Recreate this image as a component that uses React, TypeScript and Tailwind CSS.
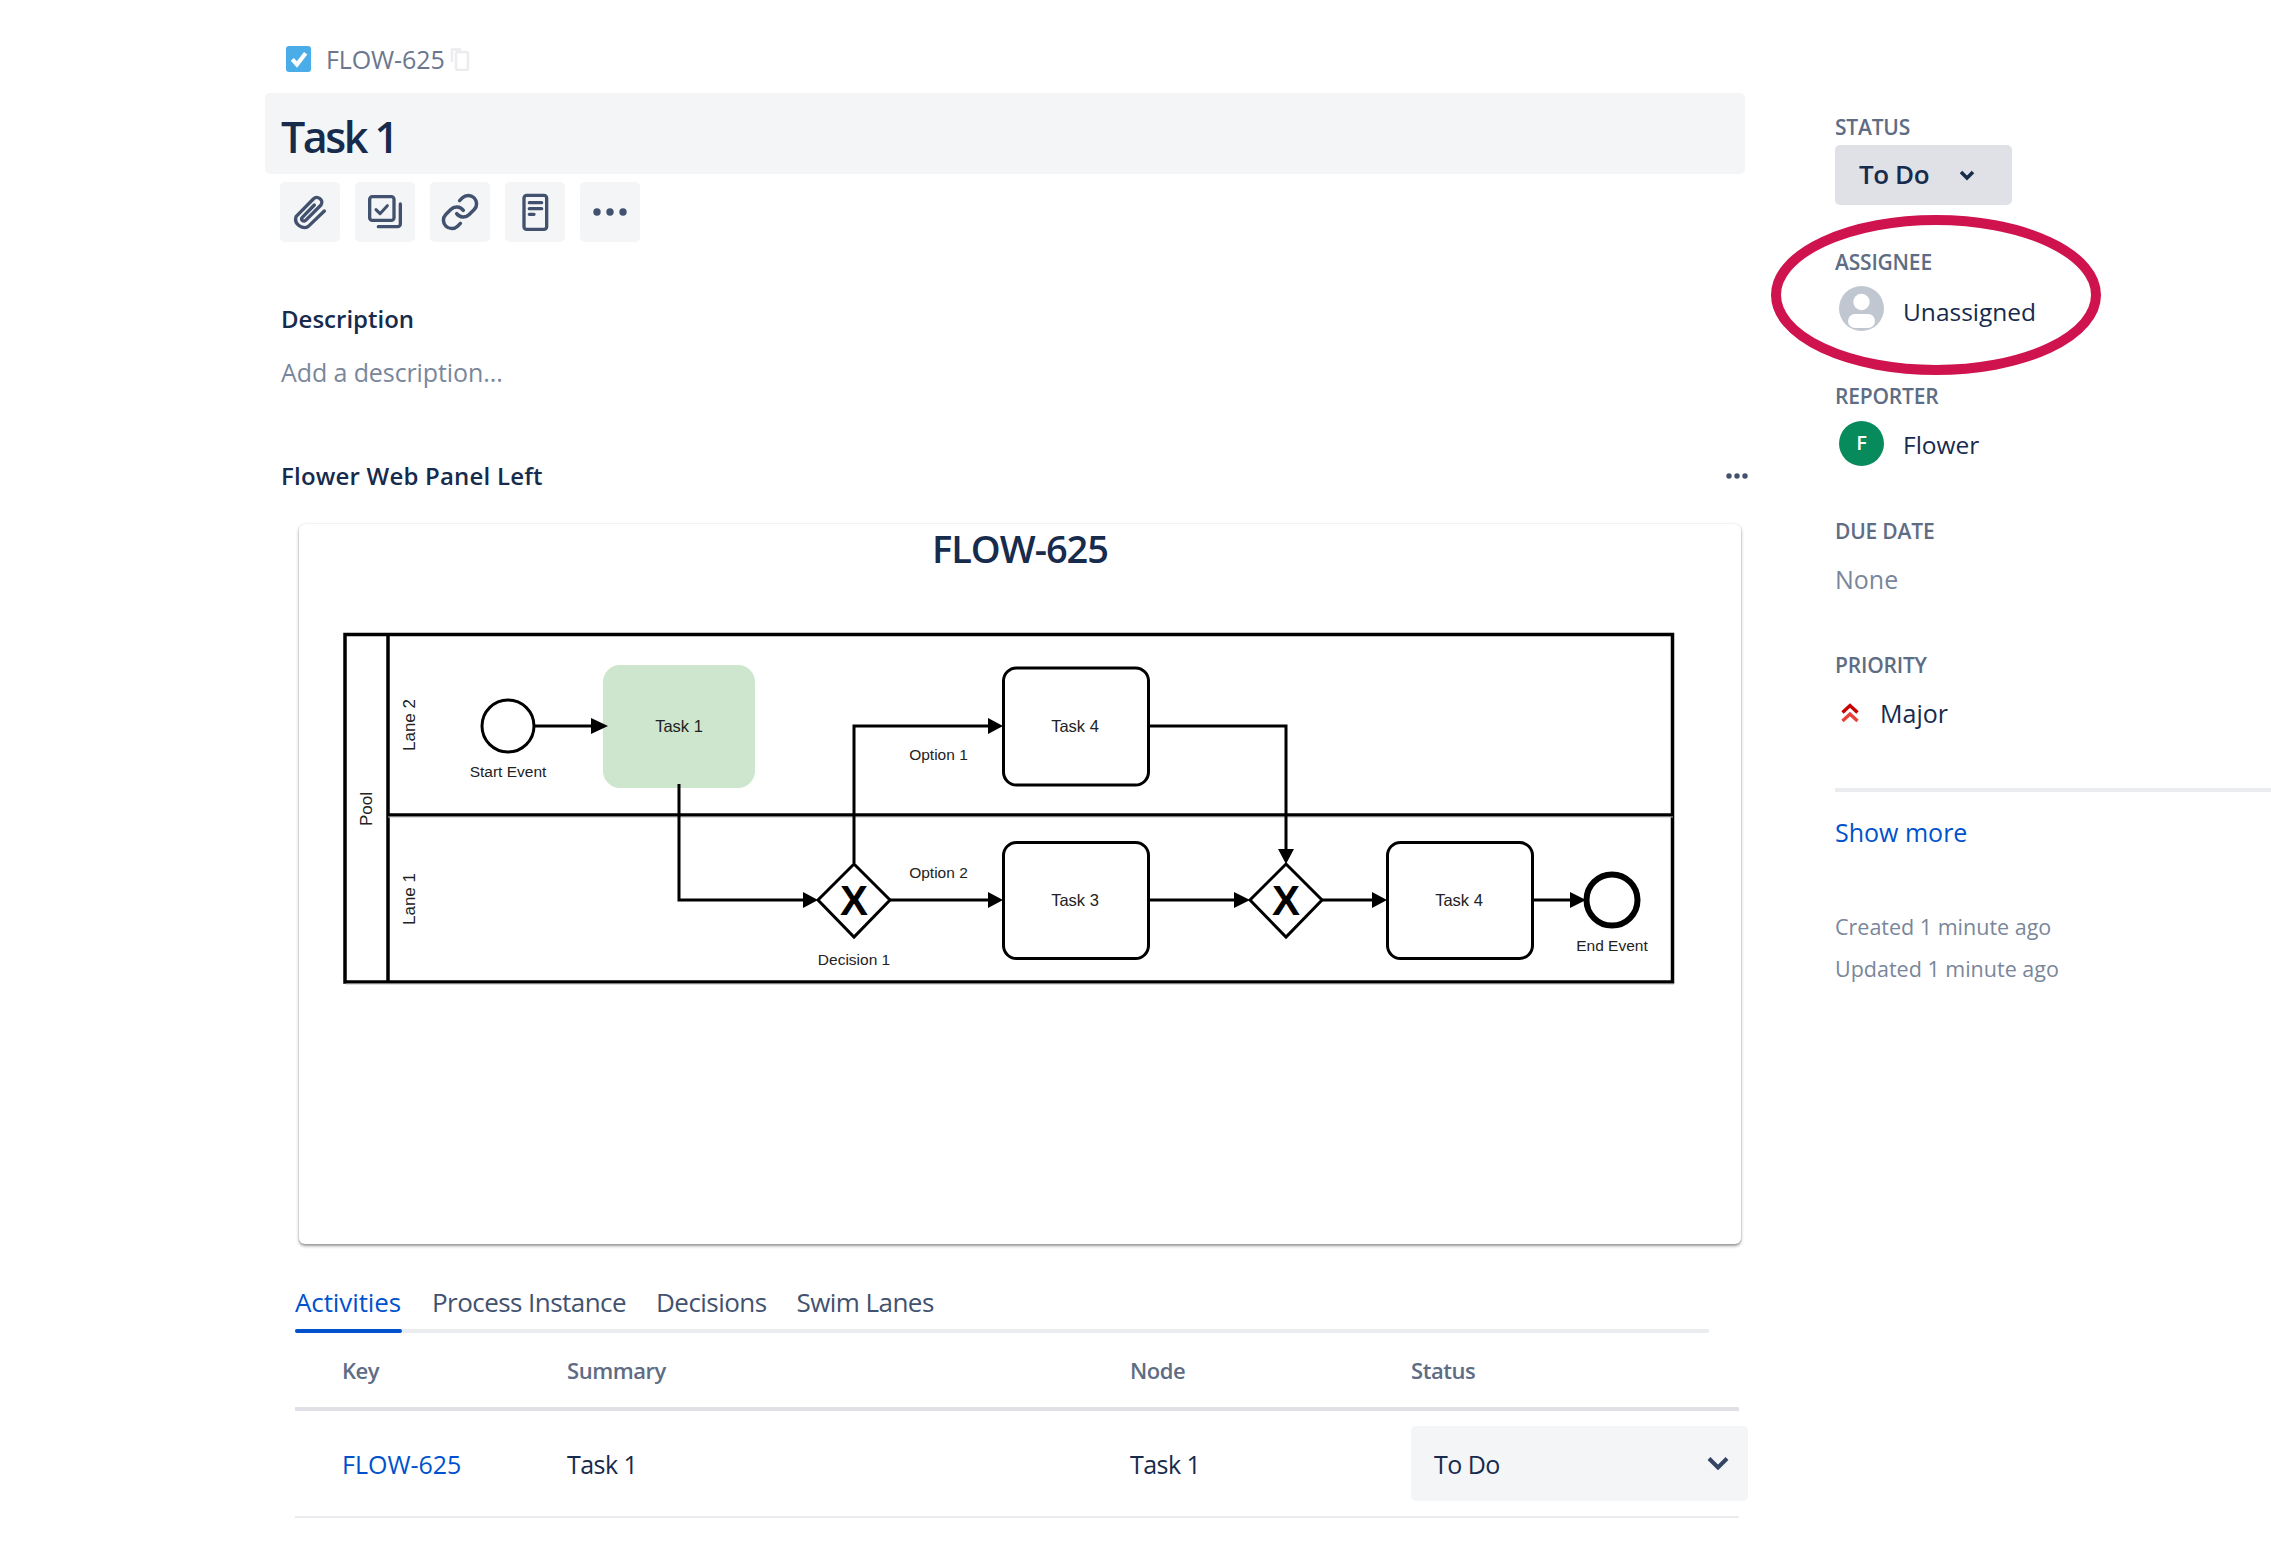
import { Link } from "lucide-react";

function Arrow({ d, head }: { d: string; head: string }) {
  return (
    <g>
      <path d={d} fill="none" stroke="#000" strokeWidth="3" />
      <polygon points={head} fill="#000" />
    </g>
  );
}

function Diagram() {
  const box = "#000";
  return (
    <svg viewBox="330 620 1360 376" className="block w-[1360px] h-[376px] font-['Liberation_Sans',sans-serif]">
      <rect x="345" y="634.5" width="1327.5" height="347.5" fill="#fff" stroke={box} strokeWidth="3.5" />
      <path d="M388 635V982M388 815H1673" fill="none" stroke={box} strokeWidth="3.5" />
      <path d="M388 817H1673M346 984H1674" fill="none" stroke="#bbb" strokeWidth="1" />
      <rect x="603" y="665" width="152" height="123" rx="17" fill="#cde6cd" />
      <circle cx="508" cy="726" r="26" fill="#fff" stroke={box} strokeWidth="3" />
      <circle cx="1612" cy="900" r="25.5" fill="#fff" stroke={box} strokeWidth="6" />
      <rect x="1003.5" y="668" width="145" height="117" rx="13" fill="#fff" stroke={box} strokeWidth="3" />
      <rect x="1003.5" y="842.5" width="145" height="116" rx="13" fill="#fff" stroke={box} strokeWidth="3" />
      <rect x="1387.5" y="842.5" width="145" height="116" rx="13" fill="#fff" stroke={box} strokeWidth="3" />
      <polygon points="854,864 890,900 854,937 818,900" fill="#fff" stroke={box} strokeWidth="3" />
      <polygon points="1286,864 1322,900 1286,937 1250,900" fill="#fff" stroke={box} strokeWidth="3" />
      <Arrow d="M535 726H592" head="591,718 608,726 591,734" />
      <Arrow d="M679 784V900H804" head="803,892 818,900 803,908" />
      <Arrow d="M854 863V726H989" head="988,718 1003,726 988,734" />
      <Arrow d="M890 900H989" head="988,892 1003,900 988,908" />
      <Arrow d="M1148 726H1286V850" head="1278,849 1286,864 1294,849" />
      <Arrow d="M1148 900H1235" head="1234,892 1250,900 1234,908" />
      <Arrow d="M1322 900H1373" head="1372,892 1387,900 1372,908" />
      <Arrow d="M1532 900H1571" head="1570,892 1586,900 1570,908" />
      <g fontSize="16.5" fill="#222" textAnchor="middle" dominantBaseline="central">
        <text x="679" y="725.5">Task 1</text>
        <text x="1075" y="725.5">Task 4</text>
        <text x="1075" y="899.5">Task 3</text>
        <text x="1459" y="899.5">Task 4</text>
      </g>
      <g fontSize="15.5" fill="#222" textAnchor="middle" dominantBaseline="central">
        <text x="508" y="771">Start Event</text>
        <text x="938.5" y="754.5">Option 1</text>
        <text x="938.5" y="872">Option 2</text>
        <text x="854" y="959">Decision 1</text>
        <text x="1612" y="945">End Event</text>
      </g>
      <g fontSize="17" fill="#222" textAnchor="middle" dominantBaseline="central">
        <text transform="translate(409 725) rotate(-90)">Lane 2</text>
        <text transform="translate(409 899) rotate(-90)">Lane 1</text>
        <text transform="translate(366 809) rotate(-90)">Pool</text>
      </g>
      <g fontSize="42" fontWeight="700" fill="#000" textAnchor="middle">
        <text x="854" y="915">X</text>
        <text x="1286" y="915">X</text>
      </g>
    </svg>
  );
}

function ToolButton({ children }: { children: React.ReactNode }) {
  return (
    <div className="flex h-[60px] w-[60px] items-center justify-center rounded-[5px] bg-[#f4f5f7] text-[#42526e]">
      {children}
    </div>
  );
}

function Label({ children, className }: { children: string; className: string }) {
  return (
    <div className={`h-[24px] text-[21px] leading-[24px] font-semibold tracking-[-0.2px] text-[#5e6c84] ${className}`}>
      {children}
    </div>
  );
}

export default function App() {
  return (
    <div className="relative flex min-h-[1558px] w-[2271px] overflow-hidden bg-white font-['Open_Sans',sans-serif] text-[#172b4d]">
      <main className="ml-[265px] w-[1480px] shrink-0">
        <div className="mt-[46px] ml-[21px] flex h-[26px] items-center">
          <div className="flex h-[26px] w-[25px] items-center justify-center rounded-[3px] bg-[#4bade8]">
            <svg viewBox="0 0 24 24" className="h-[20px] w-[20px]" fill="none" stroke="#fff" strokeWidth="5">
              <path d="M4 12.5l5.5 6L20 5" />
            </svg>
          </div>
          <span className="ml-[15px] text-[25px] leading-[26px] tracking-[-0.1px] text-[#6b778c]">FLOW-625</span>
          <svg viewBox="0 0 20 24" className="ml-[5px] h-[24px] w-[20px]" fill="none" stroke="#ebecf0" strokeWidth="2.5">
            <rect x="6" y="5" width="12" height="18" rx="1.5" />
            <path d="M2 15V2.5h9" />
          </svg>
        </div>

        <div className="mt-[21px] flex h-[81px] items-center rounded-[5px] bg-[#f4f5f7] px-[16px]">
          <h1 className="mt-[6px] text-[43px] leading-[48px] tracking-[-2.5px] font-semibold text-[#172b4d]">Task 1</h1>
        </div>

        <div className="mt-[8px] ml-[15px] flex gap-[15px]">
          <ToolButton>
            <svg viewBox="15 21 120 120" className="h-[40px] w-[40px]" fill="none" stroke="currentColor" strokeWidth="10" strokeLinecap="round" strokeLinejoin="round">
              <path d="M118 78L70 124C55 134 26 120 33 95L85 42C97 30 118 45 108 60L62 106C55 112 46 104 52 97L88 60" />
            </svg>
          </ToolButton>
          <ToolButton>
            <svg viewBox="240 21 120 120" className="h-[40px] w-[40px]" fill="none" stroke="currentColor" strokeWidth="10" strokeLinecap="round" strokeLinejoin="round">
              <rect x="254" y="35" width="73" height="71" rx="8" />
              <path d="M273 74l12 12 22-24" strokeWidth="9" />
              <path d="M346 57v60a8 8 0 0 1-8 8h-58" />
            </svg>
          </ToolButton>
          <ToolButton>
            <Link className="h-[40px] w-[40px]" strokeWidth={2.1} />
          </ToolButton>
          <ToolButton>
            <svg viewBox="690 21 120 120" className="h-[40px] w-[40px]" fill="none" stroke="currentColor" strokeWidth="10" strokeLinecap="round" strokeLinejoin="round">
              <rect x="717" y="31" width="68" height="102" rx="8" />
              <path d="M733 53h37M733 71h37M733 88h14" />
            </svg>
          </ToolButton>
          <ToolButton>
            <svg viewBox="0 0 34 8" className="h-[8px] w-[34px]" fill="currentColor">
              <circle cx="4" cy="4" r="3.7" />
              <circle cx="17" cy="4" r="3.7" />
              <circle cx="30" cy="4" r="3.7" />
            </svg>
          </ToolButton>
        </div>

        <h2 className="mt-[61px] ml-[16px] text-[24px] leading-[32px] font-semibold">Description</h2>
        <p className="mt-[21px] ml-[16px] text-[25px] leading-[32px] tracking-[-0.1px] text-[#7a869a]">Add a description...</p>

        <div className="mt-[72px] ml-[16px] -mr-[3px] flex items-center justify-between">
          <h2 className="text-[24px] leading-[32px] font-semibold tracking-[0.2px]">Flower Web Panel Left</h2>
          <svg viewBox="0 0 22 6" className="h-[6px] w-[22px] text-[#42526e]" fill="currentColor">
            <circle cx="3" cy="3" r="2.7" />
            <circle cx="11" cy="3" r="2.7" />
            <circle cx="19" cy="3" r="2.7" />
          </svg>
        </div>

        <section className="mt-[32px] ml-[34px] h-[720px] w-[1442px] rounded-[6px] bg-white shadow-[0_2px_3px_rgba(50,50,50,0.5),0_0_2px_rgba(9,30,66,0.12)]">
          <div className="flex h-[96px] justify-center">
            <h3 className="-mt-[1px] text-[38px] leading-[50px] tracking-[-1px] font-semibold text-[#172b4d]">FLOW-625</h3>
          </div>
          <div className="ml-[31px]">
            <Diagram />
          </div>
        </section>

        <div className="mt-[36px] ml-[30px] flex h-[53px] w-[1414px] gap-[30px] rounded-[2px] border-b-[4px] border-[#ebecf0] text-[26px] leading-[44px] tracking-[-0.55px] text-[#42526e]">
          <div className="relative h-[53px] w-[107px] tracking-[-0.1px] text-[#0052cc]">
            Activities
            <div className="absolute right-0 bottom-0 left-0 h-[4px] rounded-[2px] bg-[#0052cc]" />
          </div>
          <div>Process Instance</div>
          <div>Decisions</div>
          <div>Swim Lanes</div>
        </div>

        <div className="ml-[30px] w-[1444px]">
          <div className="grid h-[78px] grid-cols-[272px_563px_281px_328px] items-center border-b-[4px] border-[#dfe1e6] text-[22px] leading-[30px] font-semibold tracking-[-0.45px] text-[#5e6c84]">
            <div className="pl-[47px]">Key</div>
            <div>Summary</div>
            <div>Node</div>
            <div>Status</div>
          </div>
          <div className="grid h-[107px] grid-cols-[272px_563px_281px_328px] items-center border-b-[2px] border-[#ebecf0] text-[25px] leading-[34px] tracking-[-0.55px]">
            <div className="pl-[47px] tracking-[0px] text-[#0052cc]">FLOW-625</div>
            <div>Task 1</div>
            <div>Task 1</div>
            <div className="flex h-[75px] w-[337px] items-center justify-between rounded-[5px] bg-[#f4f5f7] pr-[19px] pl-[23px]">
              <span>To Do</span>
              <svg viewBox="0 0 22 14" className="-mt-[2px] h-[14px] w-[22px]" fill="none" stroke="#344563" strokeWidth="4">
                <path d="M2 2.5l9 9 9-9" />
              </svg>
            </div>
          </div>
        </div>
      </main>

      <aside className="relative ml-[90px] flex w-[436px] flex-col">
        <Label className="mt-[115px]">STATUS</Label>
        <div className="mt-[6px] flex h-[60px] w-[177px] items-center rounded-[5px] bg-[#dfe1e6] pl-[24px] text-[26px] leading-[34px] font-semibold tracking-[-0.4px]">
          <span className="-mt-[2px]">To Do</span>
          <svg viewBox="0 0 16 11" className="ml-[30px] h-[11px] w-[16px]" fill="none" stroke="#172b4d" strokeWidth="3.5">
            <path d="M2 2l6 6 6-6" />
          </svg>
        </div>

        <Label className="mt-[45px]">ASSIGNEE</Label>
        <div className="mt-[12px] ml-[4px] flex h-[45px] items-center gap-[19px] text-[24.5px] leading-[34px]">
          <svg viewBox="0 0 45 45" className="h-[45px] w-[45px]">
            <circle cx="22.5" cy="22.5" r="22.5" fill="#c1c7d0" />
            <circle cx="22.5" cy="16" r="8.2" fill="#fff" />
            <rect x="9" y="28" width="27" height="14" rx="7" fill="#fff" />
          </svg>
          <span className="mt-[6px]">Unassigned</span>
        </div>

        <Label className="mt-[53px]">REPORTER</Label>
        <div className="mt-[13px] ml-[4px] flex h-[45px] items-center gap-[19px] text-[24.5px] leading-[34px]">
          <div className="flex h-[45px] w-[45px] items-center justify-center rounded-full bg-[#078a5c] pb-[2px] text-[20px] font-semibold text-white">F</div>
          <span className="mt-[3px]">Flower</span>
        </div>

        <Label className="mt-[53px]">DUE DATE</Label>
        <div className="mt-[19px] text-[25px] leading-[34px] text-[#7a869a]">None</div>

        <Label className="mt-[57px]">PRIORITY</Label>
        <div className="mt-[19px] ml-[6px] flex h-[34px] items-center gap-[21px] text-[25px] leading-[34px]">
          <svg viewBox="0 0 18 20" className="h-[20px] w-[18px]" fill="none" strokeWidth="3.4">
            <path d="M1.5 9.5L9 2.5l7.5 7" stroke="#c80000" />
            <path d="M1.5 18L9 11l7.5 7" stroke="#e8403a" />
          </svg>
          <span>Major</span>
        </div>

        <div className="mt-[58px] h-[4px] w-full bg-[#ebecf0]" />
        <a className="mt-[23px] text-[25px] leading-[34px] text-[#0052cc]">Show more</a>
        <div className="mt-[63px] text-[21.5px] leading-[30px] text-[#7a869a]">Created 1 minute ago</div>
        <div className="mt-[12px] text-[21.5px] leading-[30px] text-[#7a869a]">Updated 1 minute ago</div>

        <svg viewBox="0 0 330 160" className="absolute top-[215px] -left-[64px] h-[160px] w-[330px]" fill="none">
          <ellipse cx="165" cy="80" rx="160" ry="75" stroke="#cf134f" strokeWidth="10" />
        </svg>
      </aside>
    </div>
  );
}
